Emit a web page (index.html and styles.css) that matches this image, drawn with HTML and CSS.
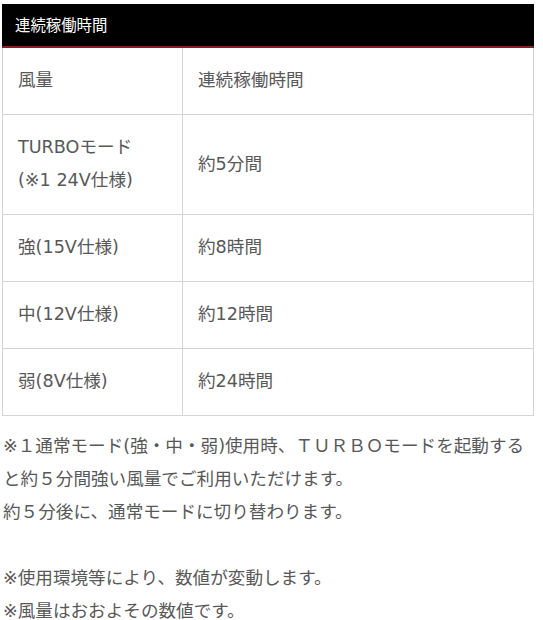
FILE: index.html
```html
<!DOCTYPE html>
<html lang="ja">
<head>
<meta charset="utf-8">
<link rel="stylesheet" href="styles.css">
</head>
<body>
<div class="wrap">
  <div class="head">連続稼働時間</div>
  <table class="spec">
    <tr><td class="c1">風量</td><td>連続稼働時間</td></tr>
    <tr><td class="c1">TURBOモード<br>(※1 24V仕様)</td><td>約5分間</td></tr>
    <tr><td class="c1">強(15V仕様)</td><td>約8時間</td></tr>
    <tr><td class="c1">中(12V仕様)</td><td>約12時間</td></tr>
    <tr><td class="c1">弱(8V仕様)</td><td>約24時間</td></tr>
  </table>
  <div class="notes">
    <p>※１通常モード(強・中・弱)使用時、ＴＵＲＢＯモードを起動する</p>
    <p>と約５分間強い風量でご利用いただけます。</p>
    <p>約５分後に、通常モードに切り替わります。</p>
    <p>&nbsp;</p>
    <p>※使用環境等により、数値が変動します。</p>
    <p>※風量はおおよその数値です。</p>
  </div>
</div>
</body>
</html>
```

FILE: styles.css
```css
html, body {
  margin: 0;
  padding: 0;
  background: #fff;
}
body {
  font-family: "DejaVu Sans", "Noto Sans CJK JP", sans-serif;
  color: #585858;
}
.wrap {
  width: 532px;
  padding: 4px 0 0 2px;
}
.head {
  background: #000;
  color: #fff;
  font-family: "Noto Sans CJK JP", sans-serif;
  font-size: 15.4px;
  height: 42px;
  line-height: 40px;
  padding: 0 13px;
  border-bottom: 2px solid #8e1b1f;
}
.spec {
  width: 100%;
  border-collapse: collapse;
  font-size: 17.6px;
  line-height: 33px;
}
.spec td {
  border: 1px solid #d4d4d4;
  border-top: none;
  padding: 16px 15px 17px;
  vertical-align: middle;
  text-align: left;
}
.spec td.c1 {
  width: 149px;
}
.notes {
  margin-top: 14px;
  font-size: 17.6px;
  line-height: 33px;
  padding-left: 1px;
}
.notes p {
  margin: 0;
  white-space: nowrap;
}
```
